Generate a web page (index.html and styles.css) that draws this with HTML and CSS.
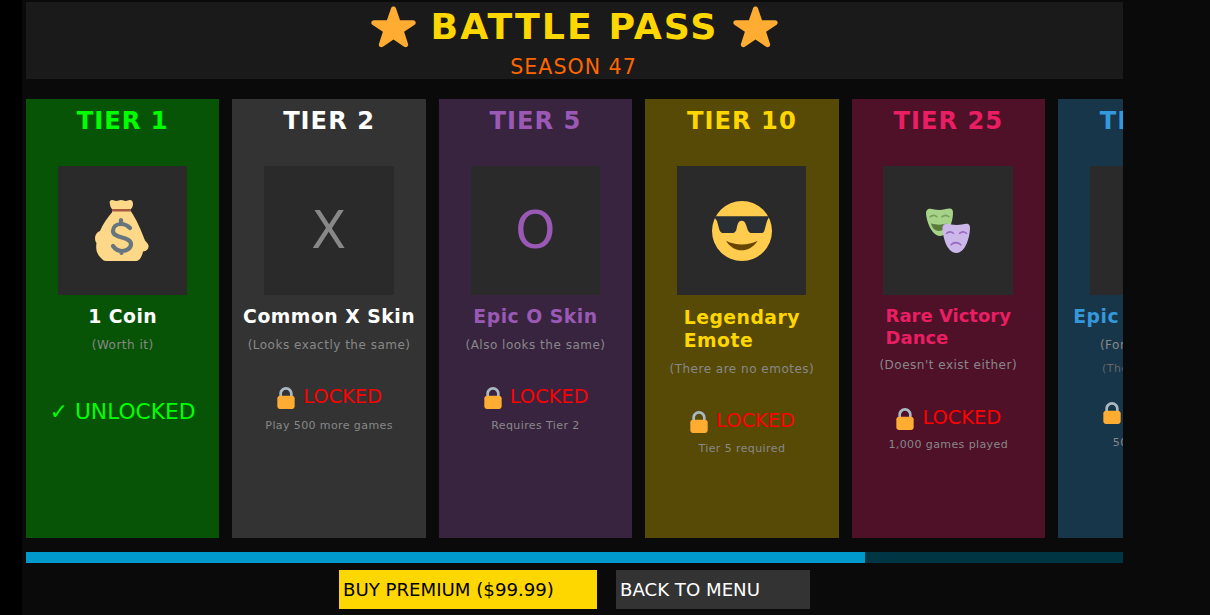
FILE: index.html
```html
<!DOCTYPE html>
<html lang="en">
<head>
  <meta charset="UTF-8">
  <title>Battle Pass</title>
  <link rel="stylesheet" href="styles.css">
</head>
<body>

<svg class="defs" width="0" height="0">
  <symbol id="star" viewBox="0 0 36 36" preserveAspectRatio="none">
    <path fill="#ffac33" d="M27.287 34.627c-.404 0-.806-.124-1.152-.371L18 28.422l-8.135 5.834c-.693.496-1.623.496-2.312-.008-.689-.499-.979-1.385-.721-2.194l3.034-9.792-8.062-5.681c-.685-.505-.97-1.393-.708-2.203.264-.808 1.016-1.357 1.866-1.363L12.947 13l3.179-9.549c.268-.809 1.023-1.353 1.874-1.353.851 0 1.606.545 1.875 1.353L23 13l10.036.015c.853.006 1.606.556 1.867 1.363.263.81-.022 1.698-.708 2.203l-8.062 5.681 3.034 9.792c.26.809-.033 1.695-.72 2.194-.347.254-.753.379-1.16.379z"/>
  </symbol>
  <symbol id="lock" viewBox="0 0 36 36">
    <path fill="#aab8c2" d="M18 3C12.477 3 8 7.477 8 13v10h4V13c0-3.313 2.686-6 6-6s6 2.687 6 6v10h4V13c0-5.523-4.477-10-10-10z"/>
    <path fill="#ffac33" d="M31 32c0 2.209-1.791 4-4 4H9c-2.209 0-4-1.791-4-4V20c0-2.209 1.791-4 4-4h18c2.209 0 4 1.791 4 4v12z"/>
  </symbol>
</svg>

<div class="game">

  <div class="header">
    <div class="title">
      <svg class="star"><use href="#star"/></svg>
      <span>BATTLE PASS</span>
      <svg class="star"><use href="#star"/></svg>
    </div>
    <div class="season">SEASON 47</div>
  </div>

  <div class="tiers">

    <!-- Tier 1 -->
    <div class="card green">
      <div class="tier">TIER 1</div>
      <div class="reward">
        <svg class="bag" viewBox="0 0 54 61">
          <path fill="#fdd888" d="M15 4c-1-2 0-4 2-4 2 0 3 1 4 1 2 0 3-1 5-1 2 0 3 1 5 1 1 0 2-1 4-1 2 0 3 2 3 4 0 2-1 4-2 5v2.500c2 3 5 8 7 12.500 3 6 5 12 7 16.500 1 1 3 3 3.500 5 .5 3-1.500 5.500-5.500 6-.5 3-2.500 8-5 9-1 .500-2 .500-3 .500H11c-2 0-3-1-4-2-2-2-4-4-4.500-6-1.500-2-1.500-7-1-10-1-1-1.500-3-1.500-5 0-3 2-6 5-7 3-7 8-14 12-18.500V9c-1-1-2-3-2-5z"/>
          <path fill="#a9583f" d="M17 9h19v2.500H17z"/>
          <path fill="none" stroke="#67757f" stroke-width="4.200" stroke-linecap="round" d="M35 28c-3-3-6-4-9-4-5 0-8 3-8 7 0 8 18 5 18 13 0 4-4 7-9 7-4 0-7-2-9-5M26 20v4M26.500 51v2"/>
        </svg>
      </div>
      <div class="name">1 Coin</div>
      <div class="note">(Worth it)</div>
      <div class="unlocked">✓ UNLOCKED</div>
    </div>

    <!-- Tier 2 -->
    <div class="card grey">
      <div class="tier">TIER 2</div>
      <div class="reward"><span class="skin">X</span></div>
      <div class="name">Common X Skin</div>
      <div class="note">(Looks exactly the same)</div>
      <div class="status"><svg class="lock"><use href="#lock"/></svg>LOCKED</div>
      <div class="req">Play 500 more games</div>
    </div>

    <!-- Tier 5 -->
    <div class="card purple">
      <div class="tier">TIER 5</div>
      <div class="reward"><span class="skin">O</span></div>
      <div class="name">Epic O Skin</div>
      <div class="note">(Also looks the same)</div>
      <div class="status"><svg class="lock"><use href="#lock"/></svg>LOCKED</div>
      <div class="req">Requires Tier 2</div>
    </div>

    <!-- Tier 10 -->
    <div class="card gold">
      <div class="tier">TIER 10</div>
      <div class="reward">
        <svg class="cool" viewBox="0 0 36 36">
          <circle fill="#ffcc4d" cx="18" cy="18" r="18"/>
          <path fill="#292f33" d="M1 9.200h33.400L33 12l-1.500 5.500c-.5 1.700-1.500 1.700-2.500 1.700h-5c-1 0-2-.5-2.500-1.700l-1-3c-.5-2-1.500-2.700-2.700-2.700s-2.100.7-2.600 2.700l-.7 3c-.5 1.200-1.500 1.700-2.500 1.700H7c-1 0-2-.5-2.500-1.700L3 12z"/>
          <path fill="#664500" d="M8.400 23.800c6 3 13 3 19 0-2.500 3.800-6 5.800-9.600 5.800s-7-2-9.400-5.800z"/>
        </svg>
      </div>
      <div class="name big">Legendary<br>Emote</div>
      <div class="note">(There are no emotes)</div>
      <div class="status"><svg class="lock"><use href="#lock"/></svg>LOCKED</div>
      <div class="req">Tier 5 required</div>
    </div>

    <!-- Tier 25 -->
    <div class="card pink">
      <div class="tier">TIER 25</div>
      <div class="reward">
        <svg class="masks" viewBox="0 0 44 45">
          <path fill="#a6d388" d="M3 .8C6 .3 9 2 13.500 2S22-.2 25 .8c1.500.5 2 2 2 4 0 4-1 9-3 14-2 5-5.500 9.200-10 9.200-4.500 0-8-4.200-10.500-9.200C1.500 14 0 9 0 4.800c0-2 1.500-3.600 3-4z"/>
          <path fill="#77a05c" d="M3 9c2-3.500 7-3.500 9 0l-1.200.8c-2-2-4.600-2-6.600 0zM15 9c2-3.500 7-3.500 9 0l-1.200.8c-2-2-4.600-2-6.600 0z"/>
          <path fill="#5c7c3f" d="M5 15.500c5.500 1.500 11 1.500 16 0-1 4.500-4 7.500-8 7.500s-7-3-8-7.500z"/>
          <path fill="#cbb8e9" d="M20 15.800c3-.5 6 1.200 10.500 1.200s8-1.700 11-1.200c1.500.3 2.500 2 2.500 4 0 4-1 10-3 15-2 5-5.500 10.200-10.500 10.200S21.500 40 19.500 35c-2-5-3-11-3-15.200 0-2 1.800-3.700 3.500-4z"/>
          <path fill="#9b6ac2" d="M19.500 25.500c2-3.500 7-3.500 9 0l-1.200.8c-2-2-4.600-2-6.600 0zM32.500 25.500c2-3.500 7-3.500 9 0l-1.200.8c-2-2-4.600-2-6.600 0zM24 37c2.500-4.500 9-4.500 12 0l-1.200.8c-2.800-2.600-6.800-2.600-9.600 0z"/>
        </svg>
      </div>
      <div class="name tight">Rare Victory<br>Dance</div>
      <div class="note">(Doesn't exist either)</div>
      <div class="status"><svg class="lock"><use href="#lock"/></svg>LOCKED</div>
      <div class="req">1,000 games played</div>
    </div>

    <!-- Tier 50, cut off by the scroll edge -->
    <div class="card blue">
      <div class="tier">TIER 50</div>
      <div class="reward"></div>
      <div class="name">Epic Train Skin</div>
      <div class="note">(For real though)</div>
      <div class="note dim">(The last one, ok)</div>
      <div class="status"><svg class="lock"><use href="#lock"/></svg>LOCKED</div>
      <div class="req">50,000 games</div>
    </div>

  </div>

  <div class="progress"><div class="fill" style="width: 76.5%"></div></div>

  <div class="buttons">
    <button class="buy">BUY PREMIUM ($99.99)</button>
    <button class="back">BACK TO MENU</button>
  </div>

</div>

</body>
</html>
```

FILE: styles.css
```css
html, body {
  margin: 0;
  padding: 0;
  height: 100%;
  overflow: hidden;
  background: #000;
  font-family: 'DejaVu Sans', sans-serif;
}

.defs {
  position: absolute;
}

.game {
  margin-left: 22px;
  height: 615px;
  padding: 2px 87px 0 4px;
  box-sizing: border-box;
  background: #0a0a0a;
}

.header {
  height: 77px;
  background: #1a1a1a;
  text-align: center;
}

.title {
  display: flex;
  justify-content: center;
  align-items: center;
  gap: 14px;
  height: 48px;
  color: #ffd700;
  font-size: 36.3px;
  font-weight: bold;
  letter-spacing: 2px;
}

.star {
  width: 47px;
  height: 45px;
}

.season {
  margin: 5px 2px 0 0;
  color: #ff6600;
  font-size: 20.57px;
  letter-spacing: 1px;
}

.tiers {
  display: flex;
  gap: 13px;
  margin-top: 20px;
  height: 439px;
  overflow: hidden;
}

.card {
  flex: 0 0 193.4px;
  display: flex;
  flex-direction: column;
  align-items: center;
  text-align: center;
}

.tier {
  margin-top: 7px;
  font-size: 24.2px;
  font-weight: bold;
  letter-spacing: 1px;
  line-height: 30px;
}

.reward {
  display: flex;
  justify-content: center;
  align-items: center;
  flex: 0 0 129px;
  width: 129.4px;
  margin: 30px 0.5px 0 0;
  background: #2a2a2a;
}

.skin {
  font-size: 51px;
  line-height: 1;
}

.name {
  margin-top: 11px;
  font-size: 18.8px;
  font-weight: bold;
  letter-spacing: 0.5px;
  line-height: 22px;
  text-align: left;
  white-space: nowrap;
}

.name.big {
  line-height: 23px;
}

.name.tight {
  margin-top: 10px;
  font-size: 18px;
  letter-spacing: 0;
}

.note {
  margin-top: 10px;
  color: #888;
  font-size: 12px;
  letter-spacing: 0.5px;
  line-height: 14px;
  white-space: nowrap;
}

.tight + .note {
  margin-top: 9px;
}

.note.dim {
  margin-top: 10px;
  color: #666;
  font-size: 11px;
}

.status {
  display: flex;
  align-items: center;
  gap: 5px;
  margin: 33px 2px 0 0;
  color: #f00;
  font-size: 19.36px;
  line-height: 24px;
}

.pink .status {
  margin-top: 34px;
}

.blue .status {
  margin-top: 24px;
}

.lock {
  width: 24px;
  height: 24px;
}

.req {
  margin-top: 10px;
  color: #888;
  font-size: 11px;
  letter-spacing: 0.4px;
  line-height: 14px;
  white-space: nowrap;
}

.gold .req {
  margin-top: 9px;
}

.pink .req {
  margin-top: 8px;
}

.blue .req {
  margin-top: 12px;
}

.unlocked {
  margin-top: 48px;
  color: #0f0;
  font-size: 21.78px;
  line-height: 24px;
}

.bag { width: 54px; height: 61px; }
.cool { width: 60px; height: 60px; }
.masks { width: 44px; height: 45px; }

.green { background: rgb(7, 84, 7); color: #0f0; }
.grey { background: #333; color: #fff; }
.purple { background: #38243f; color: #9b59b6; }
.gold { background: #574a07; color: #ffd700; }
.pink { background: #4f1128; color: #e91e63; }
.blue { background: #18364a; color: #3498db; }

.green .name { color: #fff; }
.grey .skin { color: #888; }

.progress {
  height: 11px;
  margin-top: 14px;
  background: #003544;
}

.fill {
  height: 100%;
  background: #0099cc;
}

.buttons {
  display: flex;
  justify-content: center;
  gap: 19px;
  margin-top: 7px;
}

button {
  height: 39px;
  padding: 0 4px;
  border: none;
  font-family: inherit;
  font-size: 18.15px;
  text-align: left;
}

.buy {
  width: 258px;
  background: #ffd700;
  color: #000;
}

.back {
  width: 194px;
  background: #333;
  color: #fff;
}
```
